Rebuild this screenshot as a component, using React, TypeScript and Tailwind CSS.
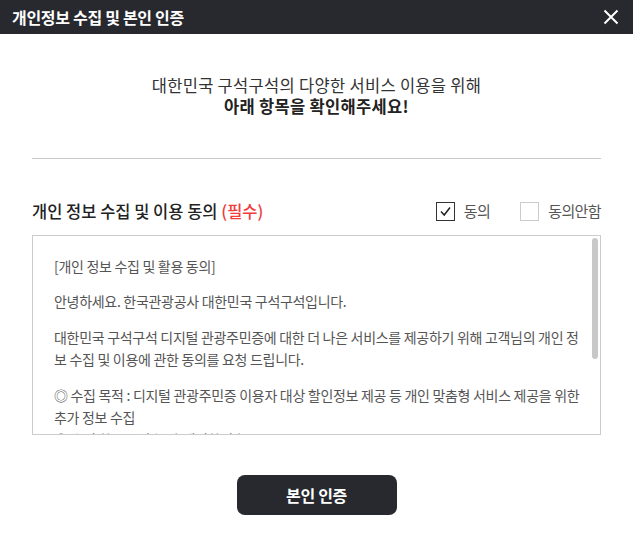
import { useState } from "react";

const font = { fontFamily: '"Noto Sans CJK KR", "Noto Sans", sans-serif' };

type AgreeBoxProps = {
  checked: boolean;
  label: string;
  onClick: () => void;
};

function AgreeBox({ checked, label, onClick }: AgreeBoxProps) {
  return (
    <button type="button" onClick={onClick} className="flex items-center gap-[9px]">
      <span
        className={`flex h-[19px] w-[19px] items-center justify-center border ${
          checked ? "border-[#333]" : "border-[#ccc]"
        } bg-white`}
      >
        {checked ? (
          <svg width="13" height="13" viewBox="0 0 13 13" fill="none">
            <path d="M2 6.5 L5.2 10 L11 2.5" stroke="#222" strokeWidth="1.5" />
          </svg>
        ) : null}
      </span>
      <span className="text-[15px] tracking-[-0.6px] text-[#555]">{label}</span>
    </button>
  );
}

export default function App() {
  const [agree, setAgree] = useState(true);

  return (
    <div className="flex min-h-[537px] w-full flex-col bg-white" style={font}>
      <header className="flex h-[34px] items-center justify-between bg-[#27292e] pl-[12px] pr-[12px]">
        <h1 className="text-[16px] font-bold tracking-[-0.3px] text-white">
          개인정보 수집 및 본인 인증
        </h1>
        <button type="button" aria-label="닫기" className="flex h-[20px] w-[20px] items-center justify-center">
          <svg width="16" height="16" viewBox="0 0 16 16" fill="none">
            <path d="M1.5 1.5 L14.5 14.5 M14.5 1.5 L1.5 14.5" stroke="#fff" strokeWidth="2" />
          </svg>
        </button>
      </header>

      <div className="flex flex-col px-[32px]">
        <p className="mt-[41px] text-center text-[16.5px] leading-[21px] tracking-[0.3px] text-[#333]">
          대한민국 구석구석의 다양한 서비스 이용을 위해
          <br />
          <b className="font-bold text-[#222]">아래 항목을 확인해주세요!</b>
        </p>

        <hr className="mt-[41px] border-0 border-t border-[#c8c8c8]" />

        <div className="mt-[40px] flex items-center justify-between">
          <h2 className="text-[16.5px] font-medium tracking-[0px] text-[#222]">
            개인 정보 수집 및 이용 동의 <span className="text-[#f03c3c]">(필수)</span>
          </h2>
          <div className="flex items-center gap-[30px]">
            <AgreeBox checked={agree} label="동의" onClick={() => setAgree(true)} />
            <AgreeBox checked={!agree} label="동의안함" onClick={() => setAgree(false)} />
          </div>
        </div>

        <div className="relative mt-[11px] h-[200px] overflow-hidden border border-[#ccc]">
          <div className="whitespace-nowrap px-[21px] pt-[19px] text-[14px] leading-[22px] tracking-[-0.3px] text-[#555]">
            <p>[개인 정보 수집 및 활용 동의]</p>
            <p className="mt-[13px]">안녕하세요. 한국관광공사 대한민국 구석구석입니다.</p>
            <p className="mt-[14px]">
              대한민국 구석구석 디지털 관광주민증에 대한 더 나은 서비스를 제공하기 위해 고객님의 개인 정
              <br />
              보 수집 및 이용에 관한 동의를 요청 드립니다.
            </p>
            <p className="mt-[14px]">
              ◎ 수집 목적 : 디지털 관광주민증 이용자 대상 할인정보 제공 등 개인 맞춤형 서비스 제공을 위한
              <br />
              추가 정보 수집
              <br />◎ 수집 항목 : (필수) 휴대전화번호
            </p>
          </div>
          <div className="absolute right-[2px] top-[2px] h-[121px] w-[6px] rounded-full bg-[#c8c8c8]" />
        </div>

        <div className="mt-[40px] flex justify-center">
          <button
            type="button"
            className="h-[40px] w-[160px] rounded-[8px] bg-[#27292e] text-[16px] font-bold tracking-[-0.3px] text-white"
          >
            본인 인증
          </button>
        </div>
      </div>
    </div>
  );
}
